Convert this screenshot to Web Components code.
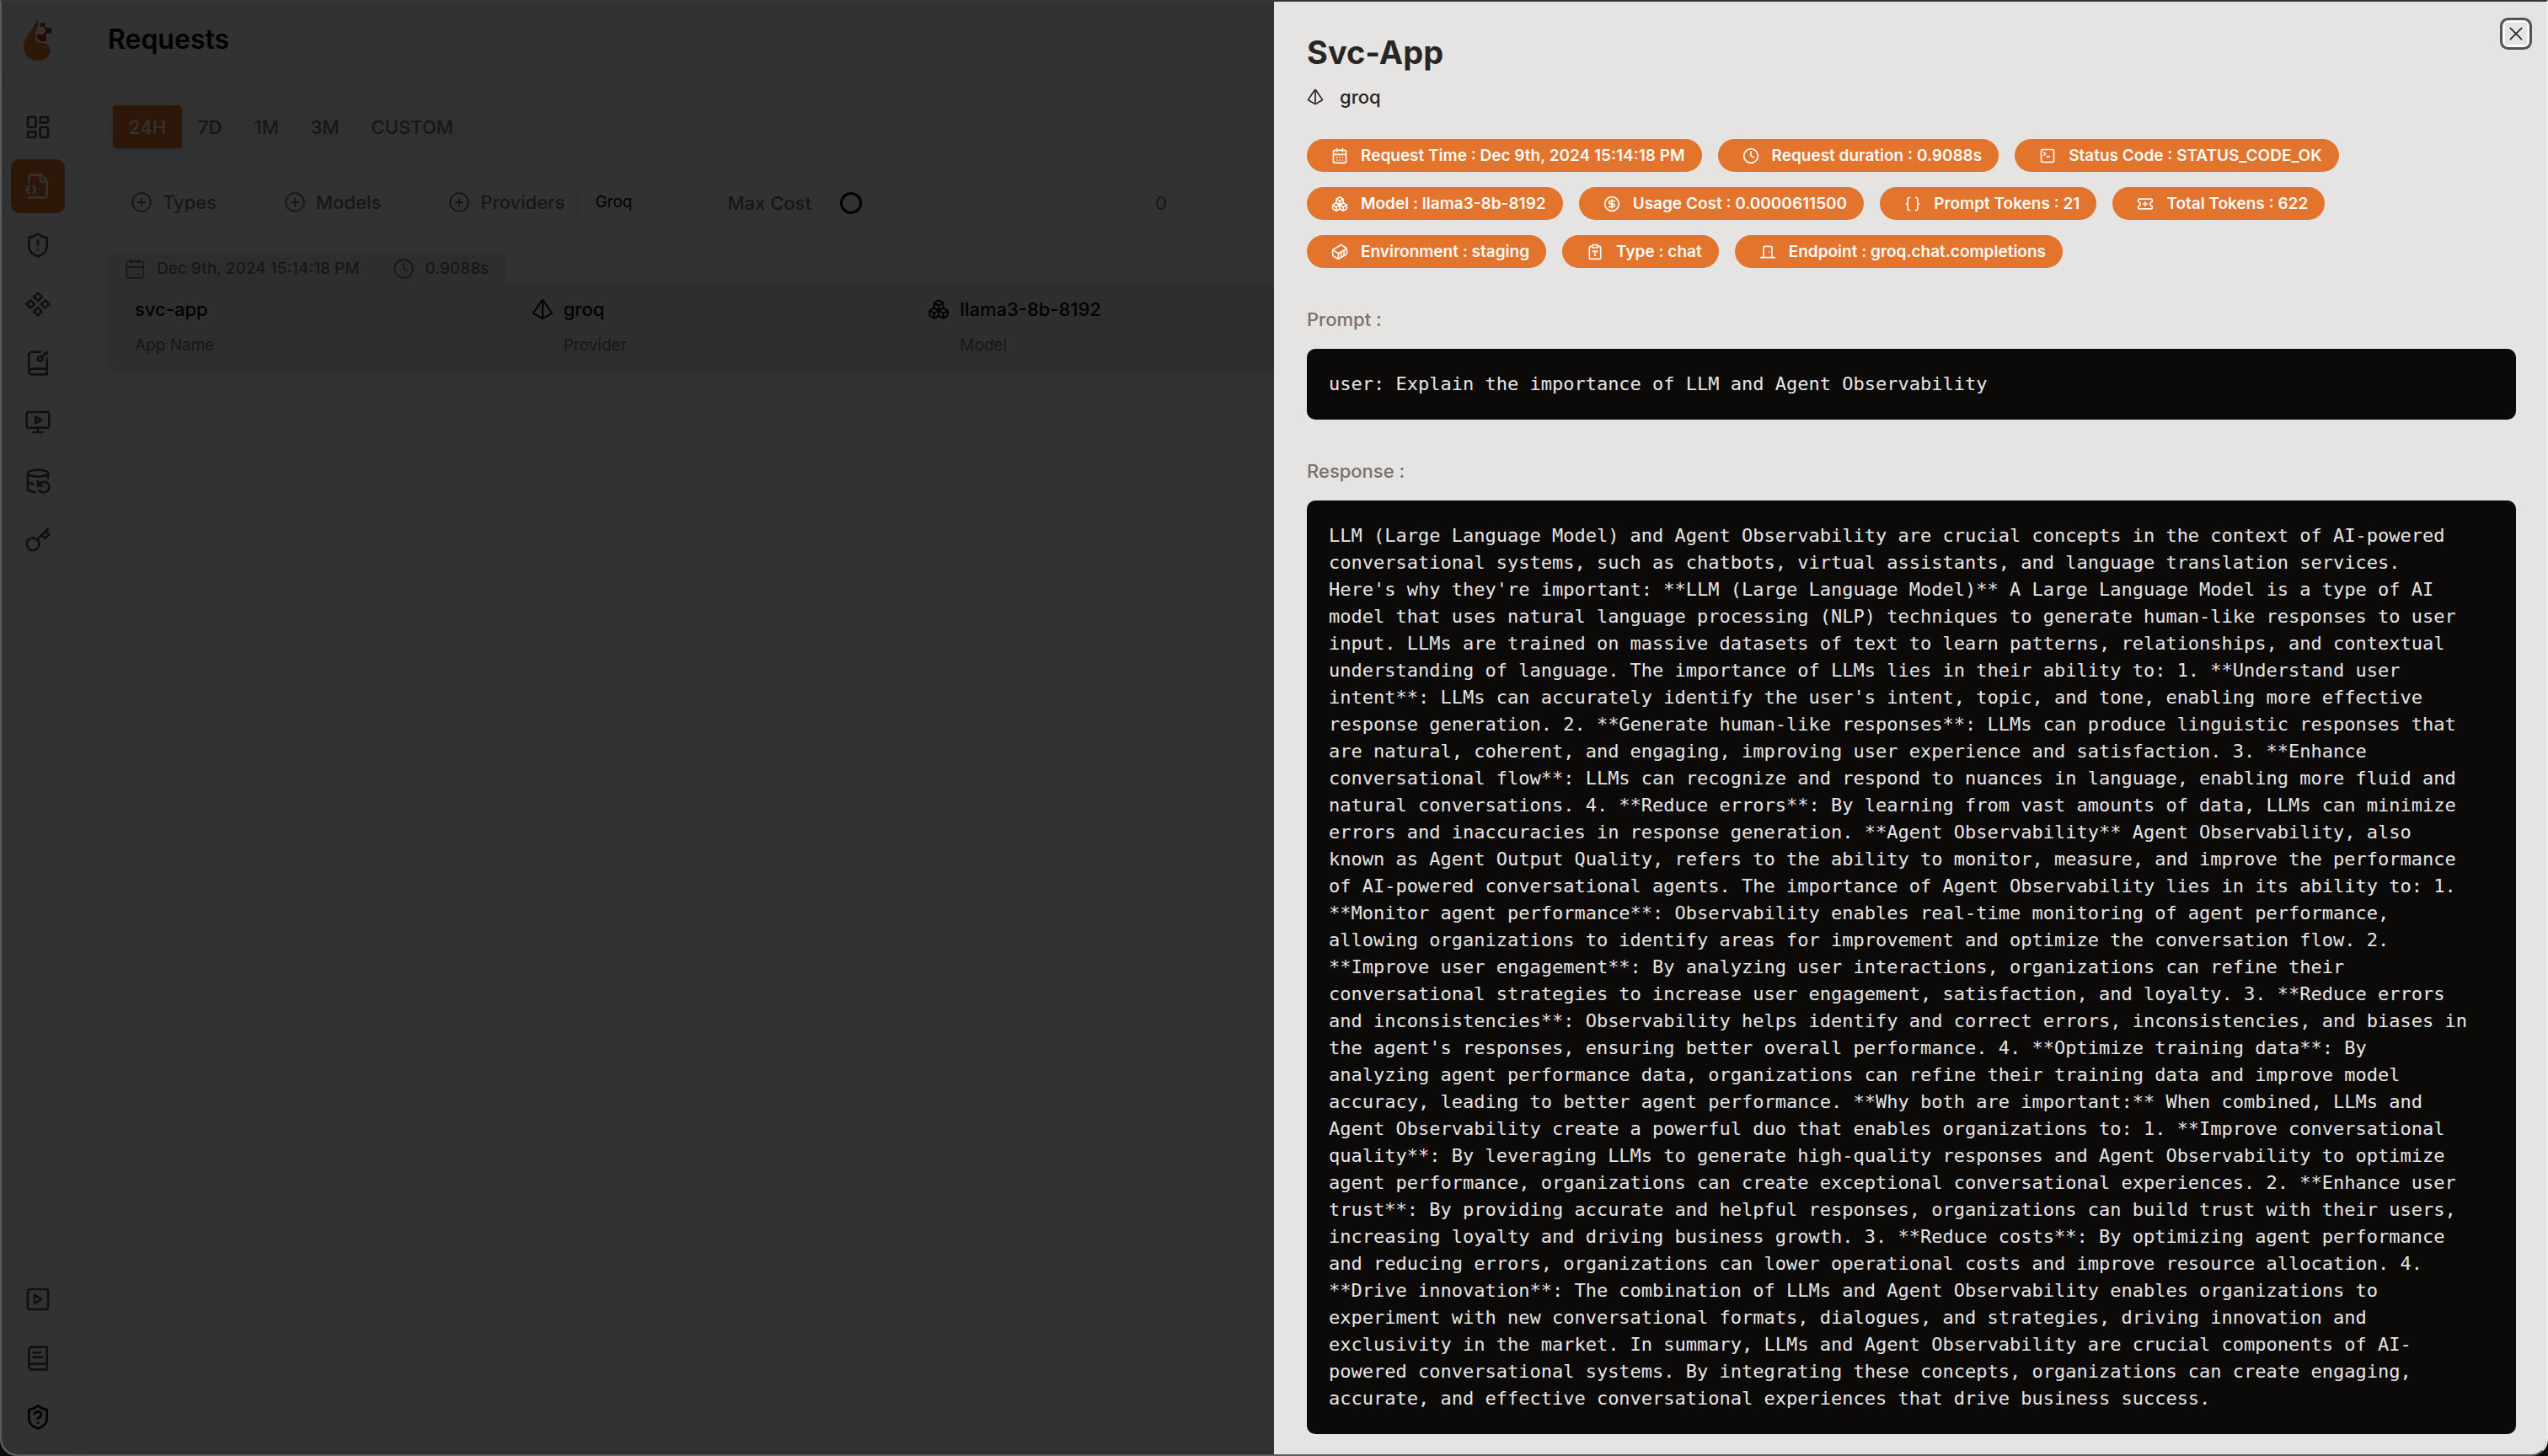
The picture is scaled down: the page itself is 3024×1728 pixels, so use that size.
<!DOCTYPE html>
<html lang="en">
<head>
<meta charset="utf-8">
<title>Requests</title>
<style>
  html, body { margin: 0; height: 100%; }
  body {
    background: #0b0d0b;
    font-family: Inter, "Noto Sans", sans-serif;
    font-size: 22px;
    line-height: 32px;
    color: #000;
    overflow: hidden;
    --page: #fafafa;
    --line: #ebebea;
    --soft: #e7e5e4;
    --primary: #e2742d;
    --muted: #78716c;
    --icon: #57534e;
  }
</style>
</head>
<body>
<app-window>
  <app-sidebar slot="sidebar"></app-sidebar>
  <requests-page slot="page"></requests-page>
  <request-drawer slot="drawer" heading="Svc-App" provider="groq">
    <tag-pill icon="calendar">Request Time : Dec 9th, 2024 15:14:18 PM</tag-pill>
    <tag-pill icon="clock">Request duration : 0.9088s</tag-pill>
    <tag-pill icon="terminal">Status Code : STATUS_CODE_OK</tag-pill>
    <tag-pill icon="boxes">Model : llama3-8b-8192</tag-pill>
    <tag-pill icon="dollar">Usage Cost : 0.0000611500</tag-pill>
    <tag-pill icon="braces">Prompt Tokens : 21</tag-pill>
    <tag-pill icon="ticket">Total Tokens : 622</tag-pill>
    <tag-pill icon="container">Environment : staging</tag-pill>
    <tag-pill icon="clipboard">Type : chat</tag-pill>
    <tag-pill icon="door">Endpoint : groq.chat.completions</tag-pill>
    <code-section slot="sections" label="Prompt :">user: Explain the importance of LLM and Agent Observability</code-section>
    <code-section slot="sections" label="Response :">LLM (Large Language Model) and Agent Observability are crucial concepts in the context of AI-powered conversational systems, such as chatbots, virtual assistants, and language translation services. Here's why they're important: **LLM (Large Language Model)** A Large Language Model is a type of AI model that uses natural language processing (NLP) techniques to generate human-like responses to user input. LLMs are trained on massive datasets of text to learn patterns, relationships, and contextual understanding of language. The importance of LLMs lies in their ability to: 1. **Understand user intent**: LLMs can accurately identify the user's intent, topic, and tone, enabling more effective response generation. 2. **Generate human-like responses**: LLMs can produce linguistic responses that are natural, coherent, and engaging, improving user experience and satisfaction. 3. **Enhance conversational flow**: LLMs can recognize and respond to nuances in language, enabling more fluid and natural conversations. 4. **Reduce errors**: By learning from vast amounts of data, LLMs can minimize errors and inaccuracies in response generation. **Agent Observability** Agent Observability, also known as Agent Output Quality, refers to the ability to monitor, measure, and improve the performance of AI-powered conversational agents. The importance of Agent Observability lies in its ability to: 1. **Monitor agent performance**: Observability enables real-time monitoring of agent performance, allowing organizations to identify areas for improvement and optimize the conversation flow. 2. **Improve user engagement**: By analyzing user interactions, organizations can refine their conversational strategies to increase user engagement, satisfaction, and loyalty. 3. **Reduce errors and inconsistencies**: Observability helps identify and correct errors, inconsistencies, and biases in the agent's responses, ensuring better overall performance. 4. **Optimize training data**: By analyzing agent performance data, organizations can refine their training data and improve model accuracy, leading to better agent performance. **Why both are important:** When combined, LLMs and Agent Observability create a powerful duo that enables organizations to: 1. **Improve conversational quality**: By leveraging LLMs to generate high-quality responses and Agent Observability to optimize agent performance, organizations can create exceptional conversational experiences. 2. **Enhance user trust**: By providing accurate and helpful responses, organizations can build trust with their users, increasing loyalty and driving business growth. 3. **Reduce costs**: By optimizing agent performance and reducing errors, organizations can lower operational costs and improve resource allocation. 4. **Drive innovation**: The combination of LLMs and Agent Observability enables organizations to experiment with new conversational formats, dialogues, and strategies, driving innovation and exclusivity in the market. In summary, LLMs and Agent Observability are crucial components of AI-powered conversational systems. By integrating these concepts, organizations can create engaging, accurate, and effective conversational experiences that drive business success.</code-section>
  </request-drawer>
</app-window>

<script>
const SHIELD = '<path d="M20 13c0 5-3.5 7.5-7.66 8.95a1 1 0 0 1-.67-.01C7.5 20.5 4 18 4 13V6a1 1 0 0 1 1-1c2 0 4.5-1.2 6.24-2.72a1.17 1.17 0 0 1 1.52 0C14.51 3.81 17 5 19 5a1 1 0 0 1 1 1z"/>';
const ICONS = {
  dashboard: '<rect width="7" height="9" x="3" y="3" rx="1"/><rect width="7" height="5" x="14" y="3" rx="1"/><rect width="7" height="9" x="14" y="12" rx="1"/><rect width="7" height="5" x="3" y="16" rx="1"/>',
  json: '<path d="M4 22h14a2 2 0 0 0 2-2V7l-5-5H6a2 2 0 0 0-2 2v4"/><path d="M14 2v4a2 2 0 0 0 2 2h4"/><path d="M4 12a1 1 0 0 0-1 1v1a1 1 0 0 1-1 1 1 1 0 0 1 1 1v1a1 1 0 0 0 1 1"/><path d="M8 18a1 1 0 0 0 1-1v-1a1 1 0 0 1 1-1 1 1 0 0 1-1-1v-1a1 1 0 0 0-1-1"/>',
  alert: SHIELD + '<path d="M12 8v4"/><path d="M12 16h.01"/>',
  help: SHIELD + '<path d="M9.1 9a3 3 0 0 1 5.82 1c0 2-3 3-3 3"/><path d="M12 17h.01"/>',
  component: '<path d="M5.5 8.5 9 12l-3.5 3.5L2 12l3.5-3.5Z"/><path d="m12 2 3.5 3.5L12 9 8.5 5.5 12 2Z"/><path d="M18.5 8.5 22 12l-3.5 3.5L15 12l3.5-3.5Z"/><path d="m12 15 3.5 3.5L12 22l-3.5-3.5L12 15Z"/>',
  bookkey: '<path d="m19 3 1 1"/><path d="m20 2-4.5 4.5"/><path d="M20 8v14H6.5a2.5 2.5 0 0 1 0-5H20"/><path d="M4 19.5v-15A2.5 2.5 0 0 1 6.5 2H14"/><circle cx="14" cy="8" r="2"/>',
  monitor: '<path d="m10 7 5 3-5 3Z"/><rect width="20" height="14" x="2" y="3" rx="2"/><path d="M12 17v4"/><path d="M8 21h8"/>',
  database: '<ellipse cx="12" cy="5" rx="9" ry="3"/><path d="M3 12a9 3 0 0 0 5 2.69"/><path d="M21 9.3V5"/><path d="M3 5v14a9 3 0 0 0 6.47 2.88"/><path d="M12 12v4h4"/><path d="M13 20a5 5 0 0 0 9-3 4.5 4.5 0 0 0-4.5-4.5c-1.33 0-2.54.54-3.41 1.41L12 16"/>',
  key: '<circle cx="7.5" cy="15.5" r="5.5"/><path d="m21 2-9.6 9.6"/><path d="m15.5 7.5 3 3L22 7l-3-3"/>',
  play: '<rect width="18" height="18" x="3" y="3" rx="2"/><path d="m9 8 6 4-6 4Z"/>',
  book: '<path d="M4 19.5v-15A2.5 2.5 0 0 1 6.5 2H20v20H6.5a2.5 2.5 0 0 1 0-5H20"/><path d="M8 7h6"/><path d="M8 11h8"/>',
  plus: '<circle cx="12" cy="12" r="10"/><path d="M8 12h8"/><path d="M12 8v8"/>',
  calendar: '<path d="M8 2v4"/><path d="M16 2v4"/><rect width="18" height="18" x="3" y="4" rx="2"/><path d="M3 10h18"/><path d="M8 14h.01"/><path d="M12 14h.01"/><path d="M16 14h.01"/><path d="M8 18h.01"/><path d="M12 18h.01"/><path d="M16 18h.01"/>',
  clock: '<circle cx="12" cy="12" r="10"/><path d="M12 6v6l4 2"/>',
  terminal: '<path d="m7 11 2-2-2-2"/><path d="M11 13h4"/><rect width="18" height="18" x="3" y="3" rx="2"/>',
  boxes: '<path d="M2.97 12.92A2 2 0 0 0 2 14.63v3.24a2 2 0 0 0 .97 1.71l3 1.8a2 2 0 0 0 2.06 0L12 19v-5.5l-5-3-4.03 2.42Z"/><path d="m7 16.5-4.74-2.85"/><path d="m7 16.5 5-3"/><path d="M7 16.5v5.17"/><path d="M12 13.5V19l3.97 2.38a2 2 0 0 0 2.06 0l3-1.8a2 2 0 0 0 .97-1.71v-3.24a2 2 0 0 0-.97-1.71L17 10.5l-5 3Z"/><path d="m17 16.5-5-3"/><path d="m17 16.5 4.74-2.85"/><path d="M17 16.5v5.17"/><path d="M7.97 4.42A2 2 0 0 0 7 6.13v4.37l5 3 5-3V6.13a2 2 0 0 0-.97-1.71l-3-1.8a2 2 0 0 0-2.06 0l-3 1.8Z"/><path d="M12 8 7.26 5.15"/><path d="m12 8 4.74-2.85"/><path d="M12 13.5V8"/>',
  dollar: '<circle cx="12" cy="12" r="10"/><path d="M16 8h-6a2 2 0 1 0 0 4h4a2 2 0 1 1 0 4H8"/><path d="M12 18V6"/>',
  braces: '<path d="M8 3H7a2 2 0 0 0-2 2v5a2 2 0 0 1-2 2 2 2 0 0 1 2 2v5c0 1.1.9 2 2 2h1"/><path d="M16 21h1a2 2 0 0 0 2-2v-5c0-1.1.9-2 2-2a2 2 0 0 1-2-2V5a2 2 0 0 0-2-2h-1"/>',
  ticket: '<path d="M2 9a3 3 0 1 1 0 6v2a2 2 0 0 0 2 2h16a2 2 0 0 0 2-2v-2a3 3 0 1 1 0-6V7a2 2 0 0 0-2-2H4a2 2 0 0 0-2 2Z"/><path d="M9 12h6"/><path d="M12 9v6"/>',
  container: '<path d="M22 7.7c0-.6-.4-1.2-.8-1.5l-6.3-3.9a1.72 1.72 0 0 0-1.7 0l-10.3 6c-.5.2-.9.8-.9 1.4v6.6c0 .5.4 1.2.8 1.5l6.3 3.9a1.72 1.72 0 0 0 1.7 0l10.3-6c.5-.3.9-1 .9-1.5Z"/><path d="M10 21.9V14L2.1 9.1"/><path d="m10 14 11.9-6.9"/><path d="M14 19.8v-8.1"/><path d="M18 17.5V9.4"/>',
  clipboard: '<rect width="8" height="4" x="8" y="2" rx="1"/><path d="M16 4h2a2 2 0 0 1 2 2v14a2 2 0 0 1-2 2H6a2 2 0 0 1-2-2V6a2 2 0 0 1 2-2h2"/><path d="M9 12v-1h6v1"/><path d="M11 17h2"/><path d="M12 11v6"/>',
  door: '<path d="M18 20V6a2 2 0 0 0-2-2H8a2 2 0 0 0-2 2v14"/><path d="M2 20h20"/><path d="M14 12v.01"/>',
  pyramid: '<path d="M2.5 16.88a1 1 0 0 1-.32-1.43l9-13.02a1 1 0 0 1 1.64 0l9 13.01a1 1 0 0 1-.32 1.44l-8.51 4.86a2 2 0 0 1-1.98 0Z"/><path d="M12 2v20"/>',
  close: '<path d="M4 4 20 20"/><path d="M20 4 4 20"/>'
};

class Base extends HTMLElement {
  connectedCallback() {
    if (this.shadowRoot) return;
    const t = document.createElement('template');
    t.innerHTML = '<style>*{box-sizing:border-box}button{font:inherit;color:inherit;border:0;background:none;margin:0;padding:0}h1,h2,p{margin:0}' + this.css() + '</style>' + this.html();
    this.attachShadow({ mode: 'open' }).append(t.content.cloneNode(true));
  }
}

/* Line icon; size comes from the host, weight from the "weight" attribute. */
customElements.define('ui-icon', class extends Base {
  css() { return ':host{display:block;flex:none;width:26px;height:26px}svg{display:block;width:100%;height:100%}'; }
  html() {
    return `<svg viewBox="0 0 24 24" fill="none" stroke="currentColor" stroke-width="${this.getAttribute('weight') || 2}" stroke-linecap="round" stroke-linejoin="round" aria-hidden="true">${ICONS[this.getAttribute('name')]}</svg>`;
  }
});

/* Browser window frame: page in the back, scrim and drawer on top. */
customElements.define('app-window', class extends Base {
  css() { return `
    :host{display:flex;position:relative;height:100vh;box-sizing:border-box;overflow:hidden;
      border:2px solid #5c5c5c;border-top-color:#37353b;border-right-color:#eeeeed;border-radius:0 0 20px 20px;background:var(--page)}
    .page{flex:1;min-width:0}
    .scrim{position:absolute;inset:0;background:rgba(0,0,0,.8)}
    .drawer{position:absolute;top:0;right:0;bottom:0;width:50%}`; }
  html() { return `<slot name="sidebar"></slot><div class="page"><slot name="page"></slot></div><div class="scrim"></div><div class="drawer"><slot name="drawer"></slot></div>`; }
});

customElements.define('nav-item', class extends Base {
  css() { return `
    :host{display:block}
    a{display:flex;align-items:center;justify-content:center;width:64px;height:64px;border-radius:10px;color:var(--icon)}
    :host([active]) a{background:var(--primary);color:#f5f5f4}
    :host([dark]) a{color:#000}
    ui-icon{width:32px;height:32px}`; }
  html() { return `<a href="#" aria-label="${this.getAttribute('label')}"><ui-icon name="${this.getAttribute('icon')}"></ui-icon></a>`; }
});

customElements.define('app-sidebar', class extends Base {
  css() { return `
    :host{display:flex;flex-direction:column;width:89px;flex:none;box-sizing:border-box;border-right:1px solid var(--line)}
    .logo{display:flex;justify-content:center;align-items:center;height:91px;padding-right:2px;border-bottom:1px solid var(--line)}
    .logo svg{width:36px;height:52px}
    nav{flex:1;display:flex;flex-direction:column;align-items:center;gap:6px;padding:26px 2px 12px 0}
    .spacer{flex:1}`; }
  html() { return `
    <div class="logo"><svg viewBox="0 0 36 52" aria-label="Logo">
      <path fill="#e2742d" d="M17 1C19 6 18 10 16.500 15C15 20 14 26 17 29C20 31 24 29 28 31C33 34 34 41 31 45C28 49 23 51 17.500 51C8 51 1 44 1 35C1 28 4 24 7 19C11 13 15 8 17 1Z"/>
      <path fill="#b8371f" d="M21 6h5v4l2 2h6v7h-6v9h-7q-3-1-4-5v-3h6l4-3v-3l-2-3h-4Z"/>
    </svg></div>
    <nav>
      <nav-item icon="dashboard" label="Dashboard"></nav-item>
      <nav-item icon="json" label="Requests" active></nav-item>
      <nav-item icon="alert" label="Exceptions"></nav-item>
      <nav-item icon="component" label="Prompt Hub"></nav-item>
      <nav-item icon="bookkey" label="Vault"></nav-item>
      <nav-item icon="monitor" label="Openground"></nav-item>
      <nav-item icon="database" label="Databases"></nav-item>
      <nav-item icon="key" label="API Keys"></nav-item>
      <div class="spacer"></div>
      <nav-item icon="play" label="Getting started"></nav-item>
      <nav-item icon="book" label="Documentation"></nav-item>
      <nav-item icon="help" label="Help" dark></nav-item>
    </nav>`; }
});

customElements.define('time-range', class extends Base {
  css() { return `
    :host{display:flex;width:max-content;padding:6px;border-radius:10px;background:#f3f3f2;color:var(--muted)}
    button{height:51px;padding:0 19px;border-radius:4px;font-weight:500}
    button[aria-pressed=true]{background:var(--primary);color:#fafaf9;box-shadow:0 2px 4px rgba(0,0,0,.1)}`; }
  html() { return ['24H','7D','1M','3M','CUSTOM'].map((t, i) => `<button type="button" aria-pressed="${i === 0}">${t}</button>`).join(''); }
});

customElements.define('filter-button', class extends Base {
  css() { return `
    :host{display:block}
    button{display:flex;align-items:center;gap:12px;height:64px;padding:0 27px 0 26px;border:1px solid var(--line);border-radius:10px;color:var(--muted);font-weight:500}
    ::slotted(filter-badge){margin-left:3px}`; }
  html() { return `<button type="button"><ui-icon name="plus" weight="1.75"></ui-icon><span>${this.getAttribute('label')}</span><slot></slot></button>`; }
});

customElements.define('filter-badge', class extends Base {
  css() { return `
    :host{display:flex;align-items:center;height:26px;padding:0 8px 0 20px;border-left:1px solid #d6d3d1;color:#000;font-size:19px;font-weight:400}`; }
  html() { return '<slot></slot>'; }
});

customElements.define('cost-slider', class extends Base {
  css() { return `
    :host{display:flex;align-items:center;height:66px;box-sizing:border-box;padding:0 66px 0 26px;border:1px solid var(--line);border-radius:10px;color:var(--muted);margin-left:25px}
    label{font-weight:500}
    input{appearance:none;width:232px;height:12px;margin:0 0 0 34px;border-radius:6px;background:#f4f4f3}
    input::-webkit-slider-thumb{appearance:none;width:26px;height:26px;border:3px solid #000;border-radius:50%;background:var(--page)}
    output{width:156px;text-align:right}`; }
  html() { return `<label for="cost">Max Cost</label><input id="cost" type="range" min="0" max="1" step="0.01" value="0"><output for="cost">0</output>`; }
});

customElements.define('request-cell', class extends Base {
  css() { return `
    :host{display:flex;gap:12px}
    ui-icon{margin-top:3px}
    .value{font-weight:500}
    .label{margin-top:14px;font-size:19px;line-height:26px;color:var(--muted)}`; }
  html() {
    const icon = this.getAttribute('icon');
    return `${icon ? `<ui-icon name="${icon}" weight="1.75"></ui-icon>` : ''}<div><p class="value">${this.getAttribute('value')}</p><p class="label">${this.getAttribute('label')}</p></div>`;
  }
});

customElements.define('request-row', class extends Base {
  css() { return `
    :host{display:block}
    .tab{display:flex;align-items:center;gap:13px;width:max-content;height:38px;padding:0 20px 0 19px;border-radius:6px 6px 0 0;background:var(--soft);color:var(--muted);font-size:19px;font-weight:500}
    .tab ui-icon + span + ui-icon{margin-left:26px}
    .cells{display:grid;grid-template-columns:repeat(6,1fr);height:103px;padding:13px 0 0 32px;border-radius:0 6px 6px 6px;background:var(--soft)}`; }
  html() { return `
    <div class="tab"><ui-icon name="calendar" weight="1.5"></ui-icon><span>Dec 9th, 2024 15:14:18 PM</span><ui-icon name="clock" weight="1.5"></ui-icon><span>0.9088s</span></div>
    <div class="cells">
      <request-cell value="svc-app" label="App Name"></request-cell>
      <request-cell icon="pyramid" value="groq" label="Provider"></request-cell>
      <request-cell icon="boxes" value="llama3-8b-8192" label="Model"></request-cell>
    </div>`; }
});

customElements.define('requests-page', class extends Base {
  css() { return `
    :host{display:block}
    header{display:flex;align-items:center;height:91px;padding-left:37px;border-bottom:1px solid var(--line)}
    h1{font-size:32px;line-height:40px;font-weight:600}
    main{display:flex;flex-direction:column;padding:26px 38px 0 37px}
    .filters{display:flex;align-items:flex-start;gap:25px;margin:26px 0}`; }
  html() { return `
    <header><h1>Requests</h1></header>
    <main>
      <time-range></time-range>
      <div class="filters">
        <filter-button label="Types"></filter-button>
        <filter-button label="Models"></filter-button>
        <filter-button label="Providers"><filter-badge>Groq</filter-badge></filter-button>
        <cost-slider></cost-slider>
      </div>
      <request-row></request-row>
    </main>`; }
});

customElements.define('tag-pill', class extends Base {
  css() { return `
    :host{display:flex;align-items:center;gap:15px;height:39px;padding:0 20px 0 29px;border-radius:20px;background:var(--primary);color:#fafaf9;font-size:19px;font-weight:600;white-space:nowrap;box-sizing:border-box}
    ui-icon{width:20px;height:20px}`; }
  html() { return `<ui-icon name="${this.getAttribute('icon')}"></ui-icon><slot></slot>`; }
});

customElements.define('code-section', class extends Base {
  css() { return `
    :host{display:block}
    h2{font-size:22px;font-weight:500;color:var(--muted);margin-bottom:19px}
    .box{padding:26px;border-radius:10px;background:#0c0a09;color:#e7e5e4;font-family:"DejaVu Sans Mono",monospace}
    p{max-width:102ch}`; }
  html() { return `<h2>${this.getAttribute('label')}</h2><div class="box"><p><slot></slot></p></div>`; }
});

customElements.define('request-drawer', class extends Base {
  css() { return `
    :host{display:flex;flex-direction:column;position:relative;height:100%;box-sizing:border-box;padding:35px 36px 26px 39px;background:#e6e4e2;color:#292524;overflow:hidden}
    h1{font-size:38px;line-height:51px;font-weight:700}
    .provider{display:flex;align-items:center;gap:19px;margin:11px 0 34px;font-weight:500}
    .provider ui-icon{width:20px;height:20px}
    .tags{display:flex;flex-wrap:wrap;gap:18px 19px}
    .sections{display:flex;flex-direction:column;gap:45px;margin-top:45px}
    button{position:absolute;top:25px;right:23px;width:26px;height:26px;display:flex;align-items:center;justify-content:center;border-radius:4px;color:#292524;box-shadow:0 0 0 3px #fafafa,0 0 0 6px #555352}
    button ui-icon{width:20px;height:20px}`; }
  html() { return `
    <h1>${this.getAttribute('heading')}</h1>
    <div class="provider"><ui-icon name="pyramid"></ui-icon><span>${this.getAttribute('provider')}</span></div>
    <div class="tags"><slot></slot></div>
    <div class="sections"><slot name="sections"></slot></div>
    <button type="button" aria-label="Close"><ui-icon name="close"></ui-icon></button>`; }
});
</script>
</body>
</html>
